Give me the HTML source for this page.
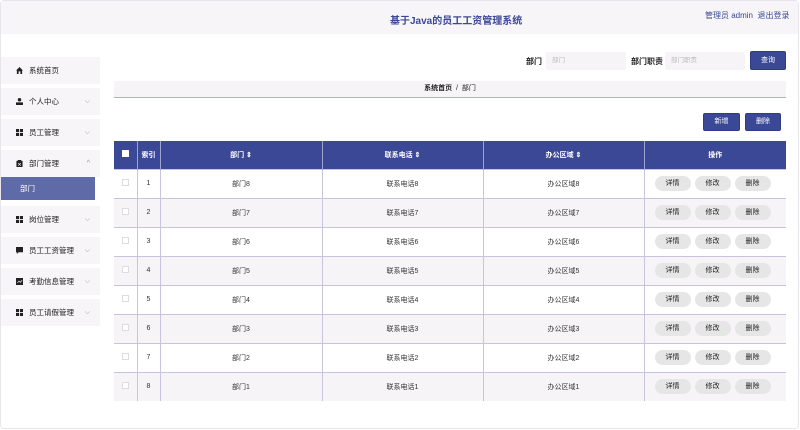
<!DOCTYPE html>
<html><head><meta charset="utf-8"><style>
*{margin:0;padding:0;box-sizing:border-box}
body{width:800px;height:430px;position:relative;background:#fff;font-family:"Liberation Sans","Noto Sans CJK SC",sans-serif;color:#333;overflow:hidden}
.frame{position:absolute;left:0;top:0;width:799px;height:429px;border:1px solid #e8e6ea;border-radius:4px}
.hdr{position:absolute;left:1px;top:1px;width:797px;height:33px;background:#f7f5f7}
.title{position:absolute;left:390px;top:12px;font-size:10px;font-weight:bold;color:#3b4896;white-space:nowrap}
.user{position:absolute;left:705px;top:10px;font-size:8px;color:#3b4896;white-space:nowrap}
.mi{position:absolute;left:1px;width:99px;height:27px;background:#f7f5f7;font-size:7.5px;color:#222;line-height:27px;padding-left:28px}
.mi .ic{position:absolute;left:15px;top:10px;width:7px;height:7px}
.mi .ar{position:absolute;right:10px;top:0;font-size:7px;color:#999}
.sub{position:absolute;left:1px;top:177px;width:94px;height:23px;background:#5f6aa8;color:#fff;font-size:7.5px;line-height:23px;padding-left:19px}
.lbl{position:absolute;font-size:8px;font-weight:bold;color:#222}
.inp{position:absolute;height:18px;background:#f6f4f6;border-radius:2px;font-size:6.5px;color:#bbb;line-height:18px;padding-left:6px}
.btn{position:absolute;background:#3b4896;color:#fff;font-size:7px;text-align:center;border-radius:2px;border:1px solid #2f3b85}
.bc{position:absolute;left:114px;top:81px;width:672px;height:17px;background:#f6f4f6;border-bottom:1px solid #aab0d0;font-size:7px;line-height:16px;text-align:center;color:#222}
table{position:absolute;left:114px;top:141px;width:672px;border-collapse:collapse;font-size:7px}
th{background:#3b4896;color:#fff;height:28px;font-weight:bold;border-left:1px solid #9ea4d0}
td{height:29px;text-align:center;border-left:1px solid #c8c4de;border-top:1px solid #c8c4de;color:#333}
tr.g td{background:#f6f4f6}
th:first-child,td:first-child{border-left:none}
.cb{display:inline-block;width:7px;height:7px;border:1px solid #ddd;background:#fff}
th .cb{border:none}
.ob{display:inline-block;width:36px;height:15px;line-height:15px;border-radius:8px;background:#e6e6e6;margin:0 2px;color:#222;font-size:7px;text-align:center}
td.op{text-align:left;padding-left:8px}
</style></head><body>
<div class="frame"></div>
<div class="hdr"></div>
<div class="title">基于Java的员工工资管理系统</div>
<div class="user">管理员 admin &nbsp;退出登录</div>

<div class="mi" style="top:57px"><svg class="ic" viewBox="0 0 8 8"><path d="M4 0L0 4h1v4h2V5h2v3h2V4h1z" fill="#222"/></svg>系统首页</div>
<div class="mi" style="top:88px"><svg class="ic" viewBox="0 0 8 8"><circle cx="4" cy="2" r="2" fill="#222"/><rect x="0" y="5" width="8" height="3" fill="#222"/></svg>个人中心<span class="ar">⌵</span></div>
<div class="mi" style="top:119px"><svg class="ic" viewBox="0 0 8 8"><rect width="3.5" height="3.5" fill="#222"/><rect x="4.5" width="3.5" height="3.5" fill="#222"/><rect y="4.5" width="3.5" height="3.5" fill="#222"/><rect x="4.5" y="4.5" width="3.5" height="3.5" fill="#222"/></svg>员工管理<span class="ar">⌵</span></div>
<div class="mi" style="top:150px"><svg class="ic" viewBox="0 0 8 8"><rect x="0.5" y="1" width="7" height="7" fill="#222"/><rect x="2" y="0" width="4" height="2" fill="#222"/><path d="M2.5 3.5l3 3M5.5 3.5l-3 3" stroke="#fff" stroke-width="0.8"/></svg>部门管理<span class="ar">^</span></div>
<div class="sub">部门</div>
<div class="mi" style="top:206px"><svg class="ic" viewBox="0 0 8 8"><rect width="3.5" height="3.5" fill="#222"/><rect x="4.5" width="3.5" height="3.5" fill="#222"/><rect y="4.5" width="3.5" height="3.5" fill="#222"/><rect x="4.5" y="4.5" width="3.5" height="3.5" fill="#222"/></svg>岗位管理<span class="ar">⌵</span></div>
<div class="mi" style="top:237px"><svg class="ic" viewBox="0 0 8 8"><path d="M0 0h8v6H3L1 8V6H0z" fill="#222"/></svg>员工工资管理<span class="ar">⌵</span></div>
<div class="mi" style="top:268px"><svg class="ic" viewBox="0 0 8 8"><rect width="8" height="8" fill="#222"/><path d="M1.5 5.5l2-2 1.5 1.5 2-2.5" stroke="#fff" stroke-width="0.8" fill="none"/></svg>考勤信息管理<span class="ar">⌵</span></div>
<div class="mi" style="top:299px"><svg class="ic" viewBox="0 0 8 8"><rect width="3.5" height="3.5" fill="#222"/><rect x="4.5" width="3.5" height="3.5" fill="#222"/><rect y="4.5" width="3.5" height="3.5" fill="#222"/><rect x="4.5" y="4.5" width="3.5" height="3.5" fill="#222"/></svg>员工请假管理<span class="ar">⌵</span></div>

<div class="lbl" style="left:526px;top:56px">部门</div>
<div class="inp" style="left:546px;top:52px;width:80px">部门</div>
<div class="lbl" style="left:631px;top:56px">部门职责</div>
<div class="inp" style="left:665px;top:52px;width:80px">部门职责</div>
<div class="btn" style="left:750px;top:51px;width:36px;height:19px;line-height:17px">查询</div>
<div class="bc"><b>系统首页</b> &nbsp;/&nbsp; 部门</div>
<div class="btn" style="left:703px;top:113px;width:37px;height:18px;line-height:16px">新增</div>
<div class="btn" style="left:745px;top:113px;width:36px;height:18px;line-height:16px">删除</div>

<table>
<colgroup><col style="width:23px"><col style="width:23px"><col style="width:162px"><col style="width:161px"><col style="width:161px"><col></colgroup>
<tr><th><span class="cb"></span></th><th>索引</th><th>部门 ⇕</th><th>联系电话 ⇕</th><th>办公区域 ⇕</th><th>操作</th></tr>
<tr><td><span class="cb"></span></td><td>1</td><td>部门8</td><td>联系电话8</td><td>办公区域8</td><td class="op"><span class="ob">详情</span><span class="ob">修改</span><span class="ob">删除</span></td></tr>
<tr class="g"><td><span class="cb"></span></td><td>2</td><td>部门7</td><td>联系电话7</td><td>办公区域7</td><td class="op"><span class="ob">详情</span><span class="ob">修改</span><span class="ob">删除</span></td></tr>
<tr><td><span class="cb"></span></td><td>3</td><td>部门6</td><td>联系电话6</td><td>办公区域6</td><td class="op"><span class="ob">详情</span><span class="ob">修改</span><span class="ob">删除</span></td></tr>
<tr class="g"><td><span class="cb"></span></td><td>4</td><td>部门5</td><td>联系电话5</td><td>办公区域5</td><td class="op"><span class="ob">详情</span><span class="ob">修改</span><span class="ob">删除</span></td></tr>
<tr><td><span class="cb"></span></td><td>5</td><td>部门4</td><td>联系电话4</td><td>办公区域4</td><td class="op"><span class="ob">详情</span><span class="ob">修改</span><span class="ob">删除</span></td></tr>
<tr class="g"><td><span class="cb"></span></td><td>6</td><td>部门3</td><td>联系电话3</td><td>办公区域3</td><td class="op"><span class="ob">详情</span><span class="ob">修改</span><span class="ob">删除</span></td></tr>
<tr><td><span class="cb"></span></td><td>7</td><td>部门2</td><td>联系电话2</td><td>办公区域2</td><td class="op"><span class="ob">详情</span><span class="ob">修改</span><span class="ob">删除</span></td></tr>
<tr class="g"><td><span class="cb"></span></td><td>8</td><td>部门1</td><td>联系电话1</td><td>办公区域1</td><td class="op"><span class="ob">详情</span><span class="ob">修改</span><span class="ob">删除</span></td></tr>
</table>
</body></html>
